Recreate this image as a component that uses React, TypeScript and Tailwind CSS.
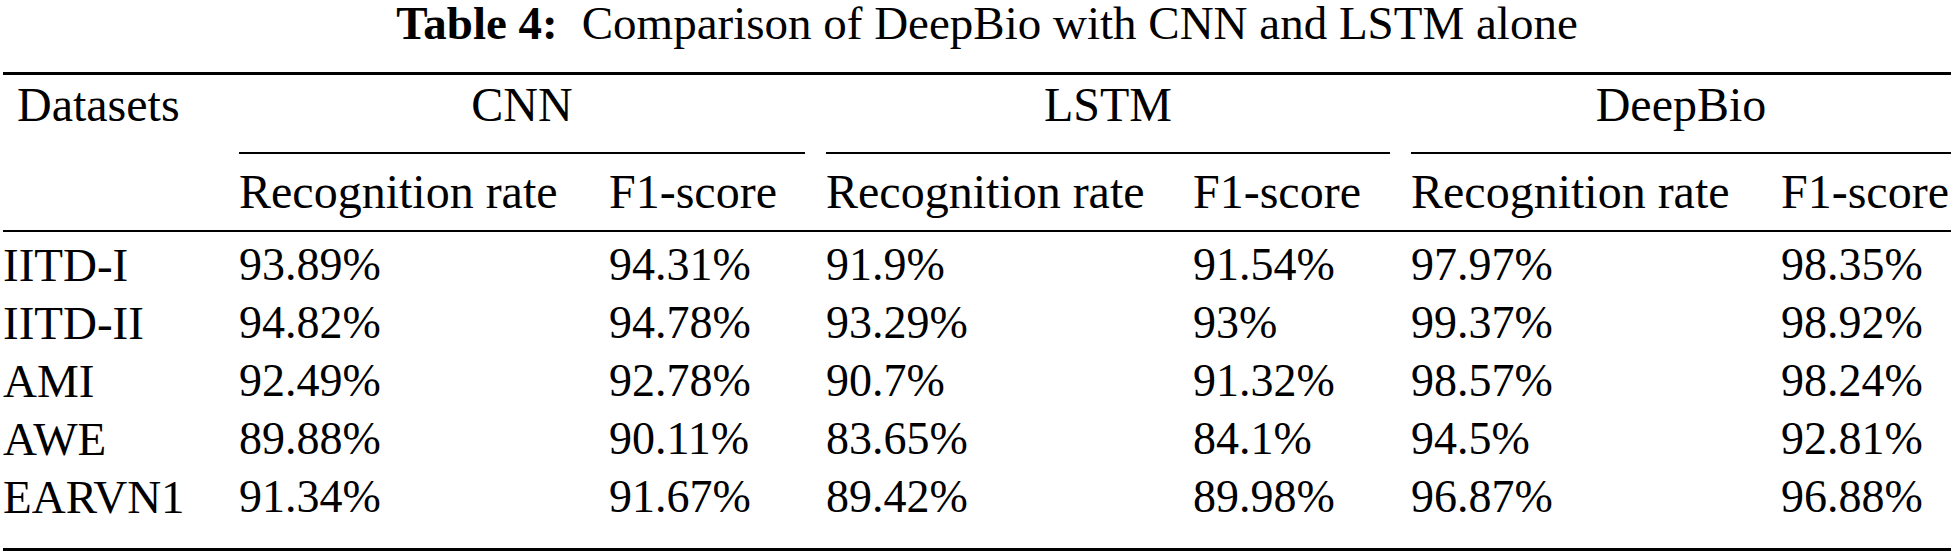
const COLS = 'grid grid-cols-[236px_370px_217px_367px_218px_370px_170px]';

const rows = [
    { name: 'IITD-I', vals: ['93.89%', '94.31%', '91.9%', '91.54%', '97.97%', '98.35%'] },
    { name: 'IITD-II', vals: ['94.82%', '94.78%', '93.29%', '93%', '99.37%', '98.92%'] },
    { name: 'AMI', vals: ['92.49%', '92.78%', '90.7%', '91.32%', '98.57%', '98.24%'] },
    { name: 'AWE', vals: ['89.88%', '90.11%', '83.65%', '84.1%', '94.5%', '92.81%'] },
    { name: 'EARVN1', vals: ['91.34%', '91.67%', '89.42%', '89.98%', '96.87%', '96.88%'] },
];

const groups = ['CNN', 'LSTM', 'DeepBio'];

export default function App() {
    return (
        <div className="font-serif">
            <div className="w-[1954px] h-[554px] overflow-hidden bg-white text-black font-[Liberation_Serif,serif] text-[48px] px-[3px]">
                {/* Caption */}
                <div className="h-[46px] leading-[46px] text-[47px] text-center pl-[20px] mb-[26px] whitespace-nowrap">
                    <span className="font-bold">Table 4:</span>
                    <span className="ml-[24px]">Comparison of DeepBio with CNN and LSTM alone</span>
                </div>

                {/* Header */}
                <div className="border-t-[3px] border-black">
                    <div className={COLS}>
                        <div className="leading-[60px] pl-[14px]">Datasets</div>
                        {groups.map((g, i) => (
                            <div
                                key={g}
                                className={`col-span-2 text-center leading-[60px] pb-[17px] border-b-2 border-black ${i < 2 ? 'mr-[21px]' : ''}`}
                            >
                                {g}
                            </div>
                        ))}
                    </div>
                    <div className={`${COLS} pt-[8px] pb-[8px] border-b-2 border-black`}>
                        <div />
                        {groups.map((g) => (
                            <div key={g} className="contents">
                                <div className="leading-[60px] whitespace-nowrap">Recognition rate</div>
                                <div className="leading-[60px] whitespace-nowrap">F1-score</div>
                            </div>
                        ))}
                    </div>
                </div>

                {/* Body */}
                <div className="pt-[4px] pb-[22px] border-b-[3px] border-black">
                    {rows.map((r) => (
                        <div key={r.name} className={`${COLS} leading-[58px]`}>
                            <div className="text-[47px]">{r.name}</div>
                            {r.vals.map((v, i) => (
                                <div key={i} className="text-[46px]">{v}</div>
                            ))}
                        </div>
                    ))}
                </div>
            </div>
        </div>
    );
}
